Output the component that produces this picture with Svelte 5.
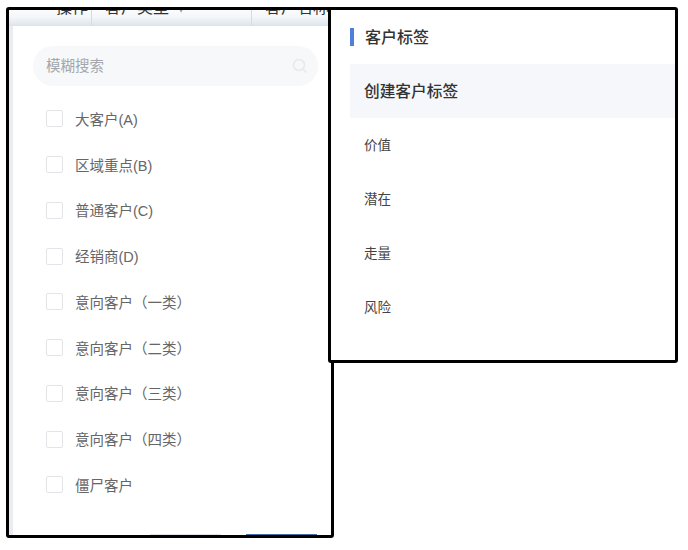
<script>
	const customerTypes = [
		'大客户(A)',
		'区域重点(B)',
		'普通客户(C)',
		'经销商(D)',
		'意向客户（一类）',
		'意向客户（二类）',
		'意向客户（三类）',
		'意向客户（四类）',
		'僵尸客户'
	];
	const tagGroups = ['价值', '潜在', '走量', '风险'];
</script>

<div class="page">
	<section class="filter-panel">
		<div class="table-head">
			<span class="cell cell-op">操作</span>
			<span class="cell cell-type">客户类型 <i>▾</i></span>
			<span class="cell cell-name">客户名称</span>
		</div>
		<div class="filter-body">
			<div class="search">
				<span class="placeholder">模糊搜索</span>
				<svg class="search-icon" width="16" height="16" viewBox="0 0 16 16" fill="none">
					<circle cx="7" cy="7" r="5.5" />
					<path d="M11 11l3.5 3.5" />
				</svg>
			</div>
			<ul class="type-list">
				{#each customerTypes as type}
					<li>
						<span class="checkbox"></span>
						<span class="type-name">{type}</span>
					</li>
				{/each}
			</ul>
			<div class="actions">
				<span class="btn"></span>
				<span class="btn primary"></span>
			</div>
		</div>
	</section>

	<section class="tag-panel">
		<h2>客户标签</h2>
		<div class="create-row">创建客户标签</div>
		<ul class="tag-list">
			{#each tagGroups as group}
				<li>{group}</li>
			{/each}
		</ul>
	</section>
</div>

<style>
	:global(body) {
		margin: 0;
		background: #fff;
	}

	.page {
		display: flex;
		align-items: flex-start;
		width: 688px;
		height: 550px;
		padding: 7px 0 0 6px;
		box-sizing: border-box;
		overflow: hidden;
		font-family: "Noto Sans CJK SC", "Liberation Sans", sans-serif;
	}

	.filter-panel {
		width: 328px;
		height: 531px;
		box-sizing: border-box;
		border: 3px solid #000;
		border-radius: 3px;
		overflow: hidden;
		flex-shrink: 0;
		display: flex;
		flex-direction: column;
	}

	.table-head {
		height: 16px;
		flex-shrink: 0;
		display: flex;
		overflow: hidden;
		background: linear-gradient(#fafbfc, #f4f6f9 45%, #dbe4ec);
		color: #333;
		font-size: 16px;
		line-height: 20px;
	}

	.cell {
		display: block;
		margin-top: -14px;
		height: 30px;
		white-space: nowrap;
		box-sizing: border-box;
		border-right: 1px solid #d5dbe2;
	}

	.cell i {
		font-style: normal;
		color: #9aa3ad;
		margin-left: 4px;
	}

	.cell-op {
		width: 83px;
		padding-left: 47px;
	}

	.cell-type {
		width: 160px;
		padding-left: 13px;
	}

	.cell-name {
		padding-left: 13px;
		border-right: 0;
	}

	.filter-body {
		flex: 1;
		min-height: 0;
		display: flex;
		flex-direction: column;
		border-left: 4px solid #e9edf2;
		padding: 20px 13px 0 20px;
		background: #fff;
	}

	.search {
		height: 40px;
		flex-shrink: 0;
		box-sizing: border-box;
		display: flex;
		align-items: center;
		justify-content: space-between;
		padding: 0 10px 0 13px;
		background: #f6f8fa;
		border-radius: 20px;
		font-size: 14.5px;
		color: #a3a7ad;
	}

	.placeholder {
		margin-top: -3px;
	}

	.search-icon {
		stroke: #e6e9ed;
		stroke-width: 1.5;
	}

	.type-list {
		list-style: none;
		margin: 10px 0 0;
		padding: 0 0 0 13px;
		display: flex;
		flex-direction: column;
		flex: 1;
	}

	.type-list li {
		height: 45.75px;
		flex-shrink: 0;
		display: flex;
		align-items: center;
		gap: 13px;
		font-family: "Liberation Sans", "Noto Sans CJK SC", sans-serif;
		font-size: 14.5px;
		color: #666;
		white-space: nowrap;
	}

	.type-name {
		margin-top: -1px;
		margin-left: -1px;
	}

	.checkbox {
		width: 17px;
		height: 17px;
		box-sizing: border-box;
		border: 1px solid #e2e4e8;
		border-radius: 2px;
		background: #fff;
		flex-shrink: 0;
	}

	.actions {
		height: 1px;
		flex-shrink: 0;
		display: flex;
		gap: 25px;
		padding-left: 117px;
	}

	.btn {
		width: 71px;
		background: #dfe3e8;
	}

	.btn.primary {
		background: #3f6fa8;
	}

	.tag-panel {
		position: relative;
		width: 350px;
		height: 356px;
		margin-left: -6px;
		flex-shrink: 0;
		box-sizing: border-box;
		border: 3px solid #000;
		border-radius: 3px;
		background: #fff;
		padding: 18px 0 0 19px;
	}

	h2 {
		margin: 0;
		height: 18px;
		box-sizing: border-box;
		display: flex;
		align-items: center;
		border-left: 4px solid #4f7fdc;
		padding: 0 0 2px 11px;
		font-size: 16px;
		font-weight: 500;
		color: #333;
	}

	.create-row {
		margin-top: 18px;
		height: 54px;
		box-sizing: border-box;
		display: flex;
		align-items: center;
		padding: 0 0 2px 14px;
		background: #f5f7fa;
		font-size: 15.7px;
		font-weight: 500;
		color: #333;
	}

	.tag-list {
		list-style: none;
		margin: 0;
		padding: 0 0 0 14px;
	}

	.tag-list li {
		height: 54px;
		box-sizing: border-box;
		padding-bottom: 2px;
		display: flex;
		align-items: center;
		font-size: 13.5px;
		color: #444;
	}
</style>
